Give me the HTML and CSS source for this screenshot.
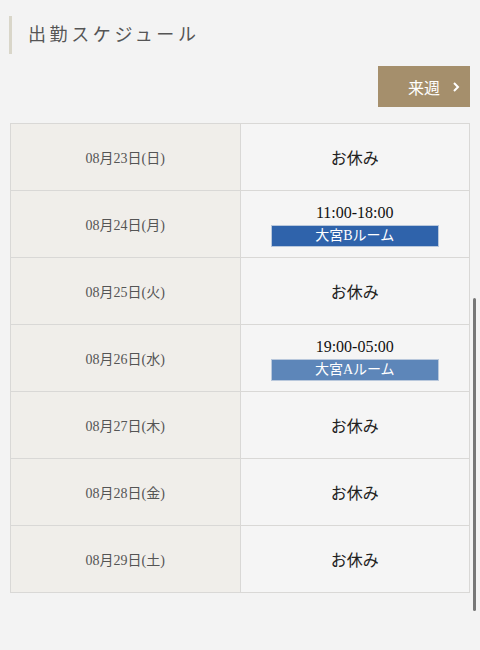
FILE: index.html
```html
<!DOCTYPE html>
<html lang="ja">
<head>
    <meta charset="UTF-8">
    <meta name="viewport" content="width=device-width, initial-scale=1.0">
    <title>出勤スケジュール</title>
    <link rel="stylesheet" href="styles.css">
</head>
<body>
    <div class="schedule">
        <h2 class="schedule-title">出勤スケジュール</h2>

        <div class="week-nav">
            <a class="next-week" href="#">来週<span class="chev">
                <svg width="8" height="12" viewBox="0 0 8 12"><path d="M2 2 L6 6 L2 10" fill="none" stroke="#fff" stroke-width="2"/></svg>
            </span></a>
        </div>

        <table class="schedule-table">
            <tr>
                <th>08月23日(日)</th>
                <td><span class="off">お休み</span></td>
            </tr>
            <tr>
                <th>08月24日(月)</th>
                <td>
                    <div class="time">11:00-18:00</div>
                    <div class="room room-b">大宮Bルーム</div>
                </td>
            </tr>
            <tr>
                <th>08月25日(火)</th>
                <td><span class="off">お休み</span></td>
            </tr>
            <tr>
                <th>08月26日(水)</th>
                <td>
                    <div class="time">19:00-05:00</div>
                    <div class="room room-a">大宮Aルーム</div>
                </td>
            </tr>
            <tr>
                <th>08月27日(木)</th>
                <td><span class="off">お休み</span></td>
            </tr>
            <tr>
                <th>08月28日(金)</th>
                <td><span class="off">お休み</span></td>
            </tr>
            <tr>
                <th>08月29日(土)</th>
                <td><span class="off">お休み</span></td>
            </tr>
        </table>
    </div>

    <div class="scroll-thumb"></div>
</body>
</html>
```

FILE: styles.css
```css
body {
    margin: 0;
    background-color: #f3f3f3;
    font-family: "Liberation Serif", "Noto Sans CJK JP", serif;
    color: #333;
}
.schedule {
    padding: 16px 10px 0 10px;
}
.schedule-title {
    margin: 0;
    padding: 6px 0 6px 16px;
    border-left: 3px solid #d9d6c9;
    margin-left: -1px;
    font-size: 18px;
    font-weight: normal;
    letter-spacing: 3.6px;
    line-height: 26px;
    color: #555;
}
.week-nav {
    display: flex;
    justify-content: flex-end;
    margin-top: 12px;
}
.next-week {
    display: flex;
    align-items: center;
    width: 92px;
    height: 41px;
    box-sizing: border-box;
    padding-left: 30px;
    background-color: #a58f6c;
    color: #fff;
    font-size: 16px;
    text-decoration: none;
}
.chev {
    display: inline-flex;
    margin-left: 12px;
}
.schedule-table {
    width: 100%;
    margin-top: 16px;
    border-collapse: collapse;
}
.schedule-table th,
.schedule-table td {
    width: 50%;
    height: 66px;
    padding: 0;
    border: 1px solid #d9d8d6;
    text-align: center;
    vertical-align: middle;
}
.schedule-table th {
    background-color: #f0eeea;
    font-weight: normal;
    font-size: 14px;
    color: #555;
}
.schedule-table td {
    background-color: #f5f5f5;
}
.off {
    font-size: 16px;
    color: #222;
}
.time {
    font-size: 16px;
    color: #111;
    line-height: 20px;
    margin-top: 1px;
}
.room {
    width: 166px;
    margin: 2px auto 0;
    padding: 1px 0;
    border: 1px solid #b9c8dc;
    color: #fff;
    font-size: 14px;
    line-height: 18px;
}
.room-b {
    background-color: #2f63ab;
}
.room-a {
    background-color: #5d86b9;
}
.scroll-thumb {
    position: fixed;
    right: 4px;
    top: 298px;
    width: 3px;
    height: 313px;
    border-radius: 2px;
    background-color: #777;
}
```
